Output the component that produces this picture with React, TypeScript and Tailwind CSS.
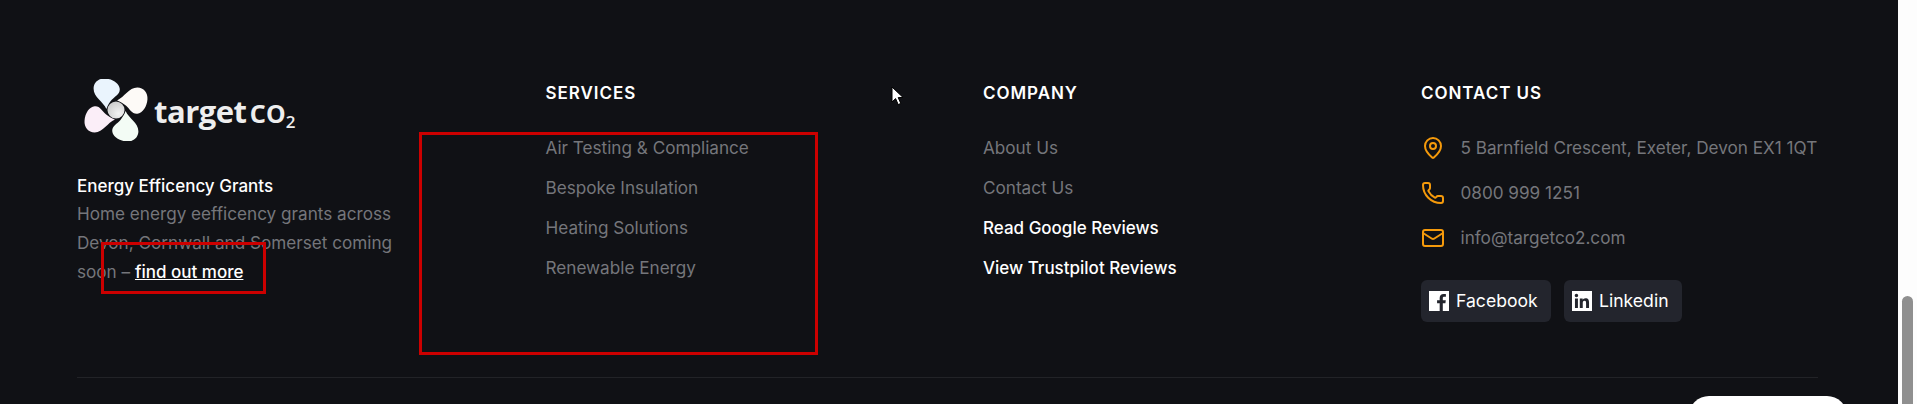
import { Mail, MapPin, Phone } from "lucide-react";

const inter = { fontFamily: "Inter, sans-serif" };

function Logo() {
  const petal = "M-9 -1 C-12 -8 -21 -12 -21 -20 C-21 -26 -16 -30 -10 -29.5 C-3 -29 3 -25 3.5 -20 C4 -15 -1 -13 -4 -9.5 C-6 -7 -8 -4 -9 -1 Z";
  const fills = ["#eaf4fd", "#fdfaf7", "#f3fcf5", "#fbeef8"];
  return (
    <div className="-mt-[2px] flex h-[64px] w-[240px] items-center pl-[7px]">
      <svg width="64" height="62" viewBox="-30 -29 60 58" className="shrink-0">
        <defs>
          <radialGradient id="hub" cx="0.65" cy="0.7" r="0.8">
            <stop offset="0" stopColor="#f3f3f3" />
            <stop offset="1" stopColor="#c9c9c9" />
          </radialGradient>
        </defs>
        {fills.map((f, i) => (
          <path key={f} d={petal} fill={f} transform={`rotate(${i * 90})`} />
        ))}
        <circle r="8" fill="url(#hub)" />
      </svg>
      <div className="ml-[6px] mt-[1px] whitespace-nowrap text-[#eeeeee] leading-none" style={{ fontFamily: "'Open Sans', sans-serif" }}>
        <span className="text-[31px] font-bold tracking-[-0.5px]">target</span>
        <span className="ml-[3px] text-[33px] font-semibold tracking-[-0.2px]">co</span>
        <span className="text-[17px] font-semibold relative top-[5px]">2</span>
      </div>
    </div>
  );
}

function Heading({ children }: { children: string }) {
  return <h3 className="pt-[1px] text-[17px] leading-6 font-semibold tracking-[0.95px] text-white uppercase">{children}</h3>;
}

function LinkList({ items }: { items: { label: string; white?: boolean }[] }) {
  return (
    <ul className="mt-[31px] flex flex-col gap-4">
      {items.map((i) => (
        <li key={i.label} className={i.white ? "text-[17px] leading-6 font-medium text-white" : "text-[17.15px] leading-6 text-[#75767b]"}>
          {i.label}
        </li>
      ))}
    </ul>
  );
}

function FacebookIcon() {
  return (
    <svg width="20" height="20" viewBox="0 0 24 24" fill="#fff">
      <path d="M24 0H0v24h12.82v-9.294H9.692v-3.622h3.128V8.413c0-3.1 1.893-4.788 4.659-4.788 1.325 0 2.463.099 2.795.143v3.24l-1.918.001c-1.504 0-1.795.715-1.795 1.763v2.313h3.587l-.467 3.622h-3.12V24H24z" />
    </svg>
  );
}

function LinkedinIcon() {
  return (
    <svg width="20" height="20" viewBox="0 0 24 24" fill="#fff">
      <path d="M20.447 20.452h-3.554v-5.569c0-1.328-.027-3.037-1.852-3.037-1.853 0-2.136 1.445-2.136 2.939v5.667H9.351V9h3.414v1.561h.046c.477-.9 1.637-1.85 3.37-1.85 3.601 0 4.267 2.37 4.267 5.455v6.286zM5.337 7.433c-1.144 0-2.063-.926-2.063-2.065 0-1.138.92-2.063 2.063-2.063 1.14 0 2.064.925 2.064 2.063 0 1.139-.925 2.065-2.064 2.065zm1.782 13.019H3.555V9h3.564v11.452zM24 0H0v24h24V0z" />
    </svg>
  );
}

function Contact({ icon, children }: { icon: React.ReactNode; children: string }) {
  return (
    <div className="flex h-[24px] items-center gap-[15.5px]">
      <span className="flex w-[24px] justify-center text-[#f59a0b]">{icon}</span>
      <span className="text-[17.15px] leading-6 text-[#75767b] whitespace-nowrap">{children}</span>
    </div>
  );
}

function Social({ icon, label, width }: { icon: React.ReactNode; label: string; width: string }) {
  return (
    <div className={`flex h-[42px] items-center gap-[7px] rounded-md bg-[#23252d] pl-[8px] text-[17.6px] font-normal text-white ${width}`}>
      {icon}
      <span>{label}</span>
    </div>
  );
}

export default function App() {
  return (
    <div className="flex h-[404px] w-full overflow-hidden" style={inter}>
      <div className="relative flex-1 overflow-hidden bg-[#101115] pt-[80px] pl-[77px] pr-[80px]">
        <div className="grid h-[298px] grid-cols-[468.5px_437.5px_438px_1fr] border-b border-[#222327]">
          <div>
            <Logo />
            <div className="mt-[30px] w-[330px] leading-[29px]">
              <p className="text-[17px] font-medium text-white">Energy Efficency Grants</p>
              <p className="-mt-[2px] text-[17.15px] text-[#75767b]">
                Home energy eefficency grants across Devon, Cornwall and Somerset coming soon –{" "}
                <a className="text-[17px] font-medium text-white underline">find out more</a>
              </p>
            </div>
          </div>
          <div>
            <Heading>Services</Heading>
            <LinkList
              items={[
                { label: "Air Testing & Compliance" },
                { label: "Bespoke Insulation" },
                { label: "Heating Solutions" },
                { label: "Renewable Energy" },
              ]}
            />
          </div>
          <div>
            <Heading>Company</Heading>
            <LinkList
              items={[
                { label: "About Us" },
                { label: "Contact Us" },
                { label: "Read Google Reviews", white: true },
                { label: "View Trustpilot Reviews", white: true },
              ]}
            />
          </div>
          <div>
            <Heading>Contact Us</Heading>
            <div className="mt-[31px] flex flex-col gap-[21px]">
              <Contact icon={<MapPin size={24} strokeWidth={2} />}>5 Barnfield Crescent, Exeter, Devon EX1 1QT</Contact>
              <Contact icon={<Phone size={24} strokeWidth={2} />}>0800 999 1251</Contact>
              <Contact icon={<Mail size={24} strokeWidth={2} />}>info@targetco2.com</Contact>
            </div>
            <div className="mt-[30px] flex gap-[13px]">
              <Social icon={<FacebookIcon />} label="Facebook" width="w-[130px]" />
              <Social icon={<LinkedinIcon />} label="Linkedin" width="w-[118px]" />
            </div>
          </div>
        </div>

        <div className="absolute left-[101px] top-[242px] h-[52px] w-[165px] border-[3px] border-[#cc0000]" />
        <div className="absolute left-[419px] top-[132px] h-[223px] w-[399px] border-[3px] border-[#cc0000]" />
        <svg className="absolute left-[891px] top-[86px]" width="14" height="20" viewBox="0 0 14 20">
          <path d="M1 1 L1 16 L4.6 12.6 L7.2 18.6 L9.8 17.4 L7.2 11.6 L12 11.4 Z" fill="#fff" stroke="#000" strokeWidth="1" />
        </svg>
        <div className="absolute left-[1689px] top-[396px] h-[40px] w-[158px] rounded-[20px] bg-white" />
      </div>
      <div className="relative w-[19px] bg-[#fdfdfd]">
        <div className="absolute left-[4px] top-[296px] h-[120px] w-[11px] rounded-full bg-[#8f8f8f]" />
      </div>
    </div>
  );
}
